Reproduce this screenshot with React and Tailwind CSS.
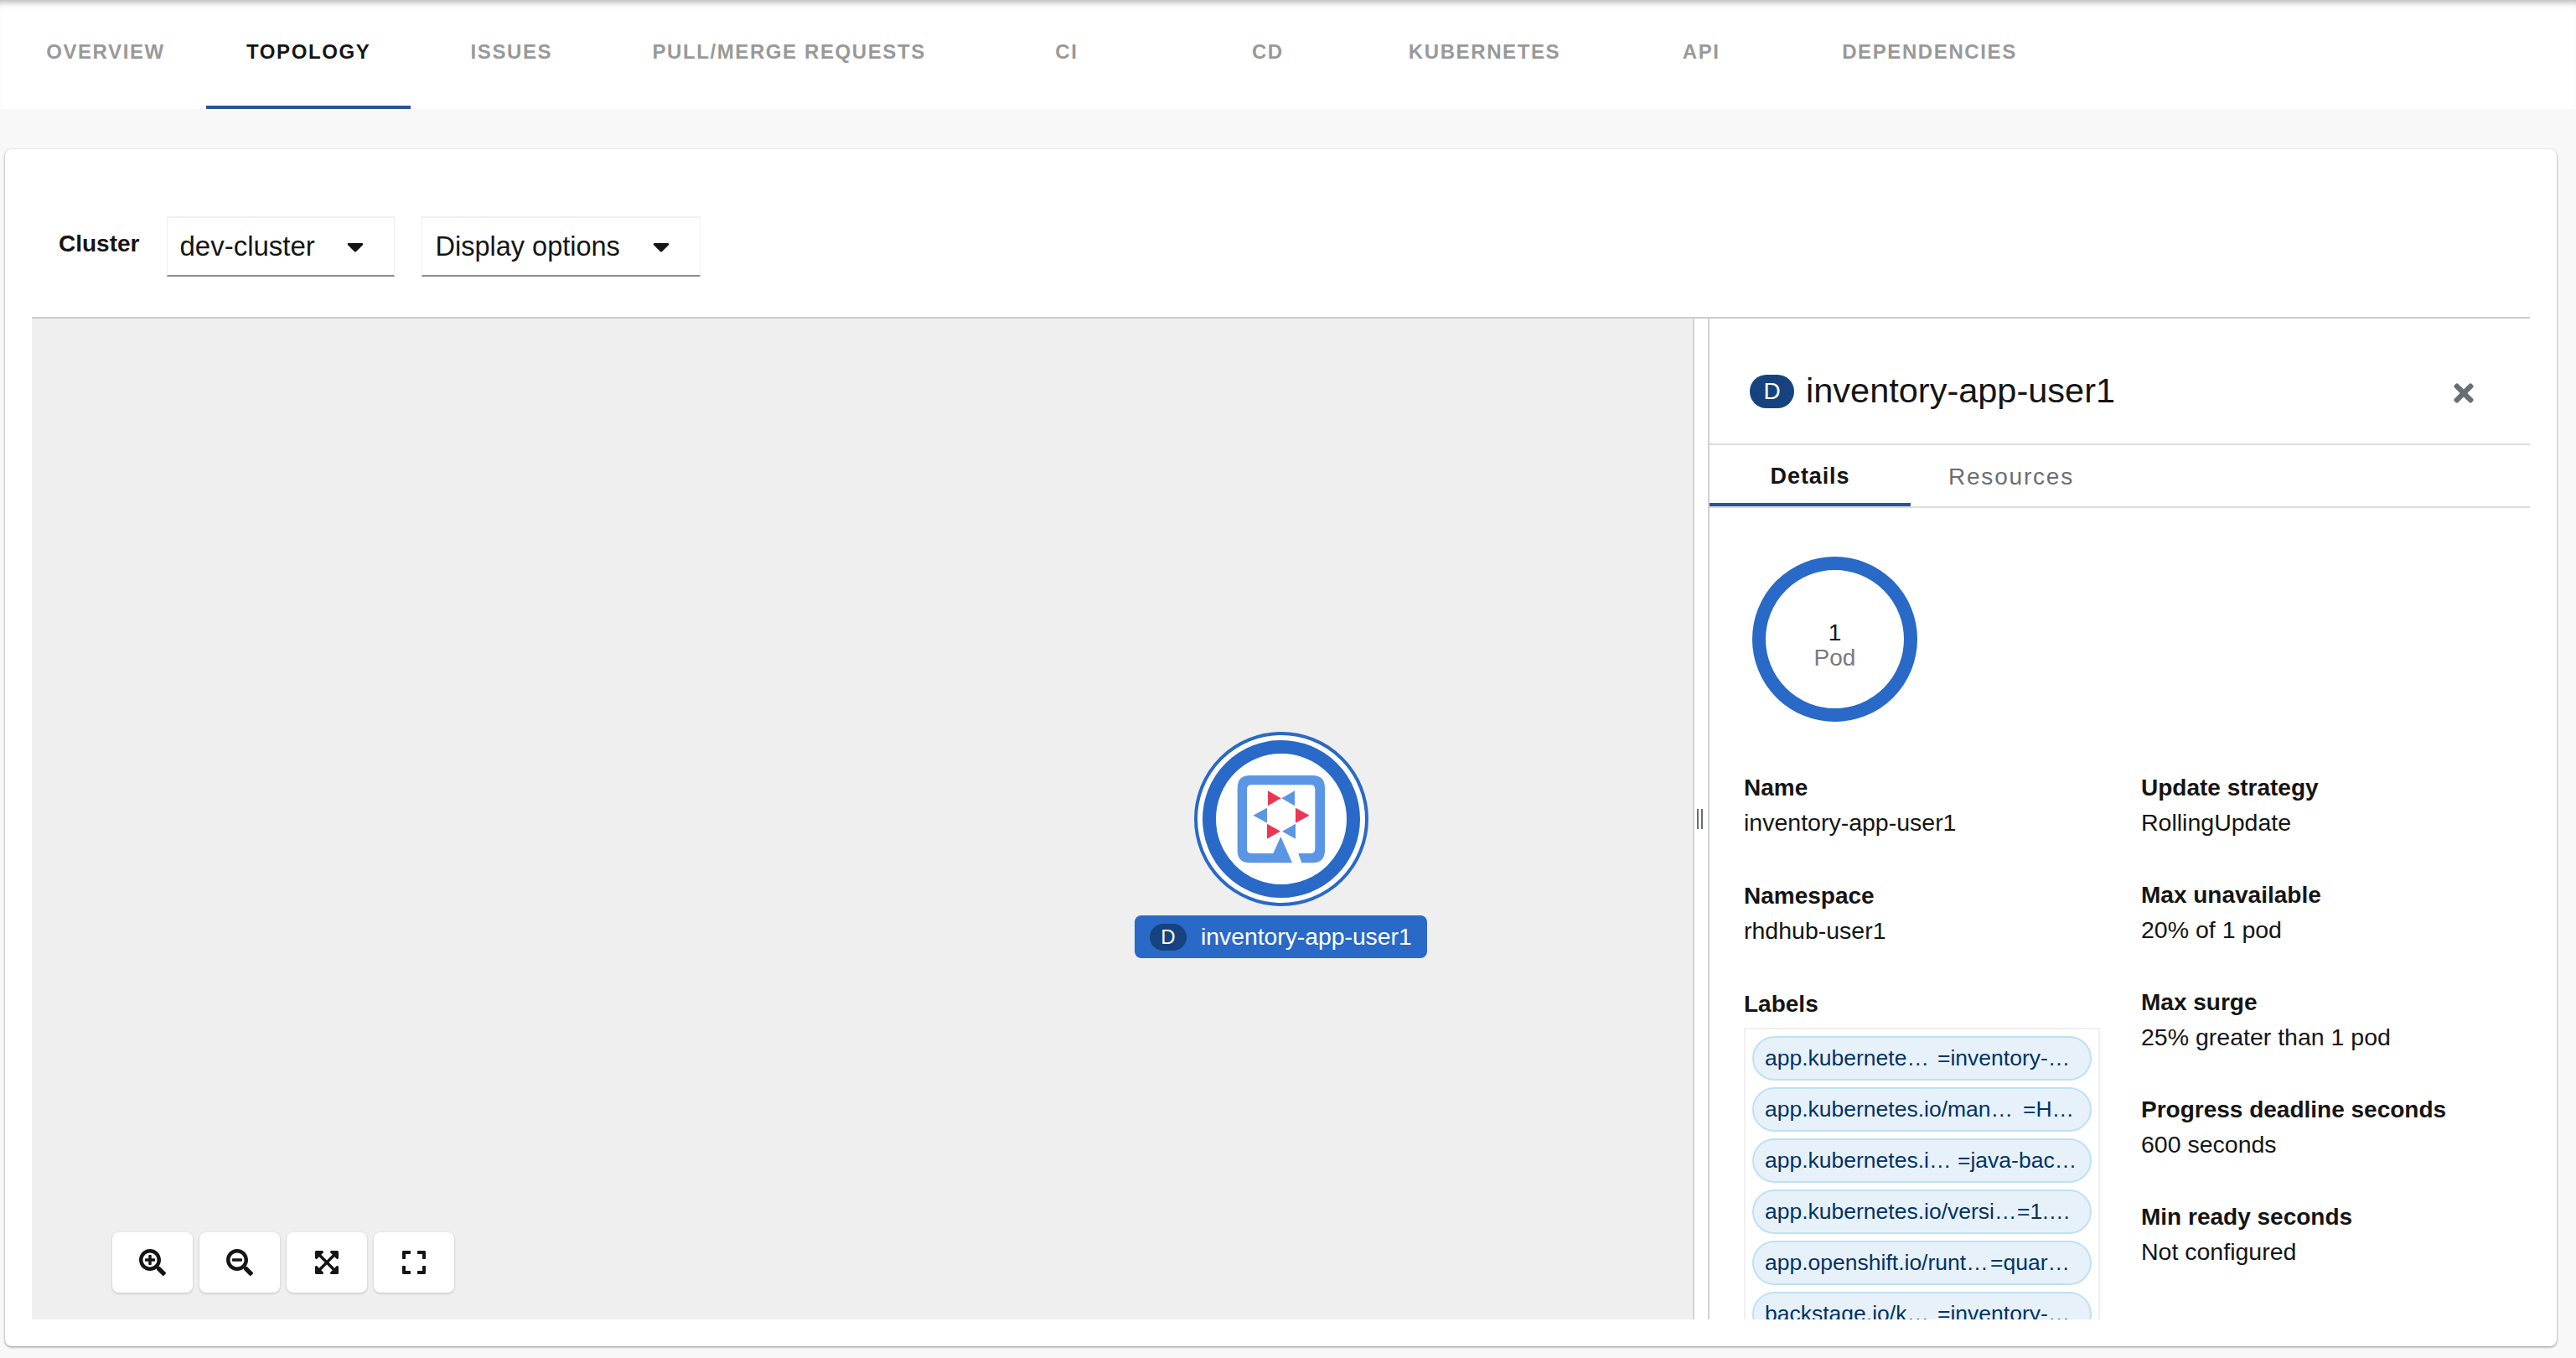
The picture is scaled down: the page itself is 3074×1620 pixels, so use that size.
import { FaCaretDown, FaExpand, FaExpandArrowsAlt, FaSearchMinus, FaSearchPlus, FaTimes } from "react-icons/fa";

const tabs = ["OVERVIEW", "TOPOLOGY", "ISSUES", "PULL/MERGE REQUESTS", "CI", "CD", "KUBERNETES", "API", "DEPENDENCIES"];

const rightDetails = [
  { label: "Update strategy", value: "RollingUpdate" },
  { label: "Max unavailable", value: "20% of 1 pod" },
  { label: "Max surge", value: "25% greater than 1 pod" },
  { label: "Progress deadline seconds", value: "600 seconds" },
  { label: "Min ready seconds", value: "Not configured" },
];

const chips = [
  { k: "app.kubernete…", v: "=inventory-…", w: "w-[206px]" },
  { k: "app.kubernetes.io/man…", v: "=H…", w: "w-[308px]" },
  { k: "app.kubernetes.i…", v: "=java-bac…", w: "w-[230px]" },
  { k: "app.kubernetes.io/versi…", v: "=1.…", w: "w-[301px]" },
  { k: "app.openshift.io/runt…", v: "=quar…", w: "w-[269px]" },
  { k: "backstage.io/k…", v: "=inventory-…", w: "w-[206px]" },
];

function Select({ label, className }) {
  return (
    <div className={`flex items-center h-[72px] bg-white border border-[#f0f0f0] border-t-2 border-b-2 border-b-[#8a8d90] ${className}`}>
      <span className="text-[#151515] whitespace-nowrap">{label}</span>
      <FaCaretDown className="w-[32px] h-[32px] text-[#151515]" />
    </div>
  );
}

function Detail({ label, value }) {
  return (
    <div>
      <div className="text-[28px] leading-[40px] font-bold text-[#151515] whitespace-nowrap">{label}</div>
      <div className="mt-[1px] text-[28.5px] leading-[40px] text-[#151515] whitespace-nowrap">{value}</div>
    </div>
  );
}

function NodeIcon() {
  return (
    <svg viewBox="375 158 624 624" className="w-[208px] h-[208px]">
      <circle cx="687" cy="470" r="306" fill="#fff" stroke="#2969c7" strokeWidth="12" />
      <circle cx="687" cy="470" r="258" fill="#fff" stroke="#2969c7" strokeWidth="48" />
      <path
        fillRule="evenodd"
        fill="#5b96e6"
        d="M726 627 L575 627 Q530 627 530 582 L530 359 Q530 314 575 314 L798 314 Q843 314 843 359 L843 582 Q843 627 798 627 L760 627 L748 593 L792 593 Q808 593 808 577 L808 364 Q808 348 792 348 L580 348 Q564 348 564 364 L564 577 Q564 593 580 593 L658 593 L685 533 Z"
      />
      <polygon fill="#ee3553" points="639,369 686,396 639,423" />
      <polygon fill="#5b96e6" points="735,369 688,396 735,423" />
      <polygon fill="#5b96e6" points="636,430 586,457 636,484" />
      <polygon fill="#ee3553" points="738,430 788,457 738,484" />
      <polygon fill="#ee3553" points="636,487 684,514 636,541" />
      <polygon fill="#5b96e6" points="738,487 690,514 738,541" />
    </svg>
  );
}

export default function App() {
  return (
    <div className="w-[3074px] h-[1620px] bg-[#f8f8f8] overflow-hidden font-['Liberation_Sans',sans-serif]">
      {/* Tabs */}
      <div className="flex h-[130px] pl-[6px] bg-white shadow-[inset_0_9px_8px_-7px_rgba(0,0,0,0.35)]">
        {tabs.map((t) => (
          <div
            key={t}
            className={`flex items-center justify-center min-w-[240px] px-[48px] pb-[2px] border-b-4 text-[24px] font-bold tracking-[1.6px] whitespace-nowrap ${
              t === "TOPOLOGY" ? "border-[#2a5593] text-[#151515]" : "border-transparent text-[#999999]"
            }`}
          >
            {t}
          </div>
        ))}
      </div>

      {/* Card */}
      <div className="mt-[48px] ml-[6px] w-[3045px] h-[1428px] px-[32px] rounded-lg bg-white shadow-[0_1px_3px_rgba(0,0,0,0.45)]">
        <div className="flex items-start h-[200px] pt-[80px] pl-[32px]">
          <span className="mt-[12px] text-[28px] font-bold text-[#151515]">Cluster</span>
          <Select label="dev-cluster" className="ml-[33px] w-[272px] pl-[14px] gap-[32px] text-[33px]" />
          <Select label="Display options" className="ml-[32px] w-[333px] pl-[15px] gap-[33px] text-[32.5px]" />
        </div>

        <div className="relative flex h-[1196px] border-t-2 border-[#cccccc] overflow-hidden">
          {/* Canvas */}
          <div className="relative w-[1982px] shrink-0 bg-[#efefef]">
            <div className="absolute left-[1387px] top-[493px]">
              <NodeIcon />
            </div>
            <div className="absolute left-[1316px] top-[712px] flex items-center w-[349px] h-[51px] pl-[18px] rounded-lg bg-[#2969c7]">
              <span className="flex items-center justify-center w-[44px] h-[32px] rounded-full bg-[#16437f] text-[24px] text-white">D</span>
              <span className="ml-[17px] text-[28.3px] text-white whitespace-nowrap">inventory-app-user1</span>
            </div>
            <div className="absolute left-[96px] top-[1090px] flex gap-[8px]">
              {[FaSearchPlus, FaSearchMinus, FaExpandArrowsAlt, FaExpand].map((Icon, i) => (
                <div key={i} className="flex items-center justify-center w-[96px] h-[72px] rounded-lg bg-white shadow-[0_1px_3px_rgba(0,0,0,0.2)]">
                  <Icon className="w-[32px] h-[32px] text-[#151515]" />
                </div>
              ))}
            </div>
          </div>

          {/* Resize handle */}
          <div className="relative w-[20px] shrink-0 bg-white border-x-2 border-[#d2d2d2]">
            <div className="absolute left-[3px] top-[585px] flex gap-[3px]">
              <div className="w-[2px] h-[24px] bg-[#6a6e73]" />
              <div className="w-[2px] h-[24px] bg-[#6a6e73]" />
            </div>
          </div>

          {/* Side panel */}
          <div className="flex-1 min-w-0">
            <div className="flex items-center h-[151px] pt-[24px] pl-[48px] pr-[62px] border-b-2 border-[#dddddd]">
              <span className="flex items-center justify-center w-[53px] h-[40px] rounded-full bg-[#16437f] text-[28px] text-white">D</span>
              <span className="ml-[14px] text-[41.5px] text-[#151515] whitespace-nowrap">inventory-app-user1</span>
              <FaTimes className="ml-auto mt-[4px] w-[34px] h-[34px] text-[#6a6e73]" />
            </div>
            <div className="flex h-[75px] border-b-2 border-[#dddddd]">
              <div className="flex items-center justify-center w-[240px] pt-[6px] border-b-4 border-[#2a5593] text-[27px] font-bold tracking-[0.9px] text-[#151515]">Details</div>
              <div className="flex items-center justify-center w-[240px] pt-[2px] text-[28px] tracking-[1.8px] text-[#6a6e73]">Resources</div>
            </div>
            <div className="pl-[41px]">
              <div className="flex flex-col items-center justify-center mt-[58px] ml-[10px] w-[197px] h-[197px] pt-[15px] rounded-full border-[16px] border-[#2969c7]">
                <span className="text-[28px] leading-[30px] text-[#151515]">1</span>
                <span className="text-[28px] leading-[30px] text-[#777b80]">Pod</span>
              </div>
              <div className="flex mt-[59px]">
                <div className="w-[474px] shrink-0 flex flex-col gap-[48px]">
                  <Detail label="Name" value="inventory-app-user1" />
                  <Detail label="Namespace" value="rhdhub-user1" />
                  <div>
                    <div className="text-[28px] leading-[40px] font-bold text-[#151515]">Labels</div>
                    <div className="flex flex-col gap-[8px] w-[425px] mt-[8px] p-[8px] border-2 border-[#f0f0f0]">
                      {chips.map((c) => (
                        <div key={c.k + c.v} className="flex items-center h-[53px] shrink-0 pl-[13px] rounded-full bg-[#e7f1fa] border-2 border-[#bee1f4] text-[26.5px] text-[#003366] whitespace-nowrap">
                          <span className={c.w}>{c.k}</span>
                          <span>{c.v}</span>
                        </div>
                      ))}
                    </div>
                  </div>
                </div>
                <div className="flex flex-col gap-[47px]">
                  {rightDetails.map((d) => (
                    <Detail key={d.label} label={d.label} value={d.value} />
                  ))}
                </div>
              </div>
            </div>
          </div>
        </div>
      </div>
    </div>
  );
}
